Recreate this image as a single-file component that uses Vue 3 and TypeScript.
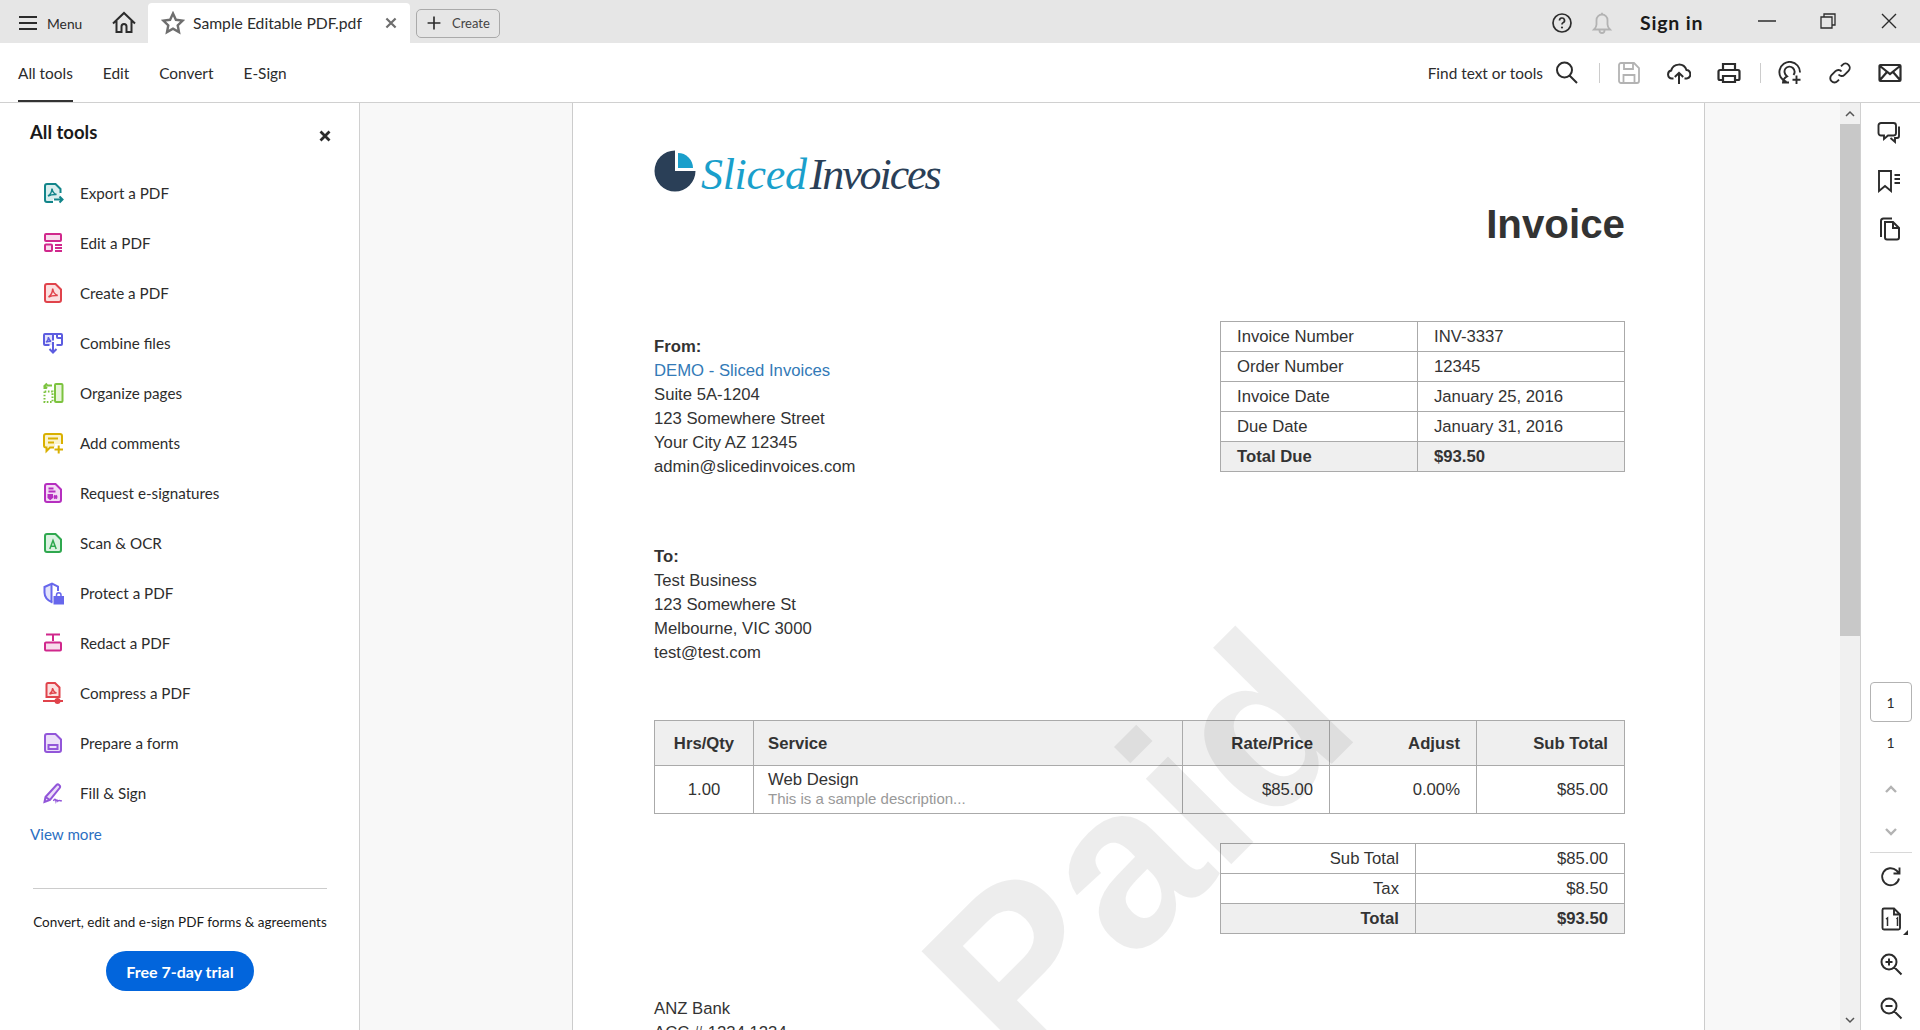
<script setup lang="ts">
interface Shape {
  d: string
  kind?: 'tint' | 'solid' | 'thin' | 'dots'
}

interface Tool {
  label: string
  color: string
  tint: string
  shapes: Shape[]
}

const docPath = 'M12.5 1H4a2 2 0 0 0-2 2v14a2 2 0 0 0 2 2h12a2 2 0 0 0 2-2V6.5z'
const acrobat = 'M5.5 14c2.5-1.5 4-4.5 4.2-8.5.4 3.5 2 6 5 7-3.2-.2-6.400.2-9.200 1.500z'

const tools: Tool[] = [
  {
    label: 'Export a PDF', color: '#12858a', tint: '#d9eeee',
    shapes: [
      { d: 'M12.500 1H4a2 2 0 0 0-2 2v14a2 2 0 0 0 2 2h6V16h7V6z', kind: 'tint' },
      { d: 'M17.500 10V6L12.500 1H4a2 2 0 0 0-2 2v14a2 2 0 0 0 2 2h6' },
      { d: 'M11 16.500h8.500M16.500 13.500l3 3-3 3' },
      { d: 'M5 13c2.500-1.500 3.800-4 4-7.500.4 3 2 5.200 4.500 6-3-.2-5.700.2-8.500 1.500z', kind: 'thin' }
    ]
  },
  {
    label: 'Edit a PDF', color: '#d0288c', tint: '#f8dcec',
    shapes: [
      { d: 'M2 1h16v7H2zM2 11.500h7V18H2z', kind: 'tint' },
      { d: 'M3 1h14a1 1 0 0 1 1 1v5a1 1 0 0 1-1 1H3a1 1 0 0 1-1-1V2a1 1 0 0 1 1-1zM3 11.500h5a1 1 0 0 1 1 1V17a1 1 0 0 1-1 1H3a1 1 0 0 1-1-1v-4.500a1 1 0 0 1 1-1z' },
      { d: 'M12 12h7M12 15h7M12 18h7' }
    ]
  },
  {
    label: 'Create a PDF', color: '#e0434b', tint: '#fbe0e0',
    shapes: [
      { d: docPath, kind: 'tint' },
      { d: docPath },
      { d: acrobat, kind: 'thin' }
    ]
  },
  {
    label: 'Combine files', color: '#5c5ce0', tint: '#e3e3fb',
    shapes: [
      { d: 'M1 1h8.500v11H1z', kind: 'tint' },
      { d: 'M6.500 12H2a1 1 0 0 1-1-1V2a1 1 0 0 1 1-1h16a1 1 0 0 1 1 1v4.500V11a1 1 0 0 1-1 1h-4.500' },
      { d: 'M10 1v6.500M14 1v3a1 1 0 0 0 1 1h4' },
      { d: 'M10 9v10.500M6.500 16l3.500 3.500 3.500-3.500' },
      { d: 'M3 9c1.500-1 2.500-2.500 2.500-5 .3 2 1 3.500 2.500 4.300-1.800-.1-3.500.1-5 .7z', kind: 'thin' }
    ]
  },
  {
    label: 'Organize pages', color: '#7cc33f', tint: '#e8f5da',
    shapes: [
      { d: 'M12 1h7.500v18H12z', kind: 'tint' },
      { d: 'M13 1h5.500a1 1 0 0 1 1 1v16a1 1 0 0 1-1 1H13a1 1 0 0 1-1-1V2a1 1 0 0 1 1-1z' },
      { d: 'M9 2.500H3.500M4 .5l-2.500 2.500L4 5.500M1.500 3v3' },
      { d: 'M1.500 8.500v10.500H9.500V8.500H1.500', kind: 'dots' }
    ]
  },
  {
    label: 'Add comments', color: '#d9b000', tint: '#fbf3cd',
    shapes: [
      { d: 'M3 1h14a2 2 0 0 1 2 2v8h-7v3H3a2 2 0 0 1-2-2V3a2 2 0 0 1 2-2z', kind: 'tint' },
      { d: 'M11 14.500H7l-3.500 3.500v-3.500H3a2 2 0 0 1-2-2V3a2 2 0 0 1 2-2h14a2 2 0 0 1 2 2v8' },
      { d: 'M5 5.500h10M5 9.500h6' },
      { d: 'M11.500 16.500h8.500M15.700 12.500v8' }
    ]
  },
  {
    label: 'Request e-signatures', color: '#b52fbf', tint: '#f3dcf5',
    shapes: [
      { d: docPath, kind: 'tint' },
      { d: docPath },
      { d: 'M5.500 5.500h5M5.500 8.500h7' },
      { d: 'M5.500 12h3.500v2.500L7.200 16 5.500 14.500z', kind: 'solid' },
      { d: 'M11 12.500l3 3m0-3l-3 3' }
    ]
  },
  {
    label: 'Scan & OCR', color: '#2fa84f', tint: '#dcf2e2',
    shapes: [
      { d: docPath, kind: 'tint' },
      { d: docPath },
      { d: 'M6.800 16l3.200-8.500 3.200 8.500M8 13.200h4', kind: 'thin' }
    ]
  },
  {
    label: 'Protect a PDF', color: '#6767ec', tint: '#e3e3fb',
    shapes: [
      { d: 'M9 .5L2 4v6c0 4 3 7.500 7 9.500z', kind: 'tint' },
      { d: 'M9.500 19.500C4.500 17.500 1.500 14 1.500 9.500V4L9 .5 15 3.500V8M8.500 1v18' },
      { d: 'M11.500 14h8.500v6.500h-8.500z', kind: 'solid' },
      { d: 'M13.500 14v-2a2.200 2.200 0 0 1 4.500 0v2', kind: 'thin' }
    ]
  },
  {
    label: 'Redact a PDF', color: '#d0288c', tint: '#f8dcec',
    shapes: [
      { d: 'M2 9.500h16v8H2z', kind: 'tint' },
      { d: 'M3 1.500h14M10 1.500v6.500' },
      { d: 'M3 9.500h14a1 1 0 0 1 1 1v6a1 1 0 0 1-1 1H3a1 1 0 0 1-1-1v-6a1 1 0 0 1 1-1z' }
    ]
  },
  {
    label: 'Compress a PDF', color: '#e0434b', tint: '#fbe0e0',
    shapes: [
      { d: 'M12 0H5a1.500 1.500 0 0 0-1.500 1.500v13h13V4.500z', kind: 'tint' },
      { d: 'M3.500 14V1.500A1.500 1.500 0 0 1 5 0h7l4.500 4.500V14z' },
      { d: 'M6.500 11c1.800-1 3-3 3.200-6 .3 2.500 1.500 4.300 3.800 5-2.400-.2-4.800 0-7 1z', kind: 'thin' },
      { d: 'M0 18h20' },
      { d: 'M14.500 16a2 2 0 1 1 0 4 2 2 0 0 1 0-4z', kind: 'solid' }
    ]
  },
  {
    label: 'Prepare a form', color: '#9256d9', tint: '#ecdff9',
    shapes: [
      { d: docPath, kind: 'tint' },
      { d: docPath },
      { d: 'M5.500 12h9v4h-9z' }
    ]
  },
  {
    label: 'Fill & Sign', color: '#9256d9', tint: '#ecdff9',
    shapes: [
      { d: 'M2.500 14L13.500 2c1.500-1.500 4.500.5 3.300 2.800L7 17l-5.500 2z', kind: 'tint' },
      { d: 'M2.500 14L13.500 2c1.500-1.500 4.500.5 3.300 2.800L7 17l-5.500 2zM2.500 14L7 17' },
      { d: 'M10.500 18c1-2.500 2-2.500 2.500 0 .5-1.500 1.300-1.500 1.800 0 .8-.8 2-.8 4 0', kind: 'thin' }
    ]
  }
]

const invoiceRows = [
  ['Invoice Number', 'INV-3337'],
  ['Order Number', '12345'],
  ['Invoice Date', 'January 25, 2016'],
  ['Due Date', 'January 31, 2016']
]

const fromLines = ['Suite 5A-1204', '123 Somewhere Street', 'Your City AZ 12345', 'admin@slicedinvoices.com']
const toLines = ['Test Business', '123 Somewhere St', 'Melbourne, VIC 3000', 'test@test.com']

function shapeFill(tool: Tool, shape: Shape): string {
  if (shape.kind === 'tint') return tool.tint
  if (shape.kind === 'solid') return tool.color
  return 'none'
}

function shapeStroke(tool: Tool, shape: Shape): string {
  return shape.kind === 'tint' ? 'none' : tool.color
}

function shapeWidth(shape: Shape): number {
  return shape.kind === 'thin' ? 1.5 : 2
}

// the outline of the moved page in "Organize pages" is dotted
function shapeDash(shape: Shape): string | undefined {
  return shape.kind === 'dots' ? '1.6 1.6' : undefined
}
</script>

<template>
  <div class="app">
    <!-- window title bar with the open tab -->
    <header class="titlebar">
      <div class="menu-btn">
        <svg class="ico" viewBox="0 0 24 24"><path d="M3 6h18M3 12h18M3 18h18" stroke-width="2.200" /></svg>
        <span class="menu-label">Menu</span>
      </div>
      <svg class="ico" viewBox="0 0 24 24"><path d="M1 12.500L12 2l11 10.500M4.500 10v11h5v-5.500a2.500 2.500 0 0 1 5 0V21h5V10" stroke-width="2" /></svg>
      <div class="tab">
        <svg class="ico" viewBox="0 0 24 24"><path class="star" d="M12 2.500l2.900 6.300 6.800.8-5 4.700 1.300 6.800-6-3.400-6 3.400 1.300-6.800-5-4.700 6.800-.8z" stroke-width="2.400" /></svg>
        <span class="tab-name">Sample Editable PDF.pdf</span>
        <svg class="ico tab-close" viewBox="0 0 24 24"><path class="star" d="M7 7l10 10M17 7L7 17" stroke-width="2.400" /></svg>
      </div>
      <div class="create">
        <svg class="ico" viewBox="0 0 24 24"><path d="M12 5v14M5 12h14" stroke-width="1.800" /></svg>
        <span>Create</span>
      </div>
      <div class="title-right">
        <svg class="ico" viewBox="0 0 24 24">
          <circle cx="12" cy="12" r="9" stroke-width="1.700" />
          <path d="M9.500 9.500a2.500 2.500 0 1 1 3.500 2.300c-.7.300-1 .8-1 1.700" stroke-width="1.700" />
          <circle class="dot" cx="12" cy="16.500" r="1.100" />
        </svg>
        <svg class="ico ico--off bell" viewBox="0 0 24 24"><path d="M4 18.500c1.500-1.500 2.500-2.500 2.500-5V9a5.500 5.500 0 0 1 11 0v4.500c0 2.500 1 3.500 2.500 5zM9.500 18.500v1a2.500 2.500 0 0 0 5 0v-1M12 3V1.800" stroke-width="1.800" /></svg>
        <span class="signin">Sign in</span>
        <svg class="ico winctl" viewBox="0 0 24 24"><path d="M3 21h18" transform="translate(0 -11)" stroke-width="1.500" /></svg>
        <svg class="ico winctl" viewBox="0 0 24 24"><path d="M5 8h11v11H5zM8 8V5h11v11h-3" transform="translate(0 -2)" stroke-width="1.300" /></svg>
        <svg class="ico winctl" viewBox="0 0 24 24"><path d="M5 3l14 14M19 3L5 17" stroke-width="1.400" /></svg>
      </div>
    </header>

    <!-- tabs and quick tools -->
    <nav class="toolbar">
      <div class="tabs">
        <span class="tabs__item tabs__item--on">All tools</span>
        <span class="tabs__item">Edit</span>
        <span class="tabs__item">Convert</span>
        <span class="tabs__item">E-Sign</span>
      </div>
      <div class="quick">
        <span class="find">Find text or tools</span>
        <svg class="ico search" viewBox="0 0 24 24"><path d="M16 16l7 7M18 10a7.500 7.500 0 1 1-15 0 7.500 7.500 0 0 1 15 0z" transform="translate(0 -1)" stroke-width="2" /></svg>
        <span class="sep sep--a"></span>
        <svg class="ico ico--off save" viewBox="0 0 24 24"><path d="M4 2h13l5 5v13a2 2 0 0 1-2 2H4a2 2 0 0 1-2-2V4a2 2 0 0 1 2-2zM7 2v6h9V2M6.500 22v-8h11v8" stroke-width="1.800" /></svg>
        <svg class="ico" viewBox="0 0 24 24"><path d="M6.500 17.500H5a4 4 0 0 1-.8-7.900A8 8 0 0 1 19.500 9a4.300 4.300 0 0 1 .3 8.500h-2.300M12 23V12M7.800 16l4.200-4.200 4.200 4.200" stroke-width="2" /></svg>
        <svg class="ico" viewBox="0 0 24 24"><path d="M6 9V3h12v6M6 19H3a1.500 1.500 0 0 1-1.500-1.500v-7A1.500 1.500 0 0 1 3 9h18a1.500 1.500 0 0 1 1.500 1.500v7A1.500 1.500 0 0 1 21 19h-3M6 15h12v6H6z" stroke-width="2.200" /></svg>
        <span class="sep sep--b"></span>
        <svg class="ico" viewBox="0 0 24 24"><path d="M11 21.500H5c.2-3 1.700-5 4-6.200-2.700-2-3.200-5.600-1.500-7.800 1.800-2.300 5.300-2.600 7.400-.5 1.900 1.900 2 4.900.6 7M8.500 21A10.300 10.300 0 1 1 22 11.500M18.500 14.500v8.500M14.500 18.800h8" stroke-width="1.900" /></svg>
        <svg class="ico" viewBox="0 0 24 24"><path d="M10.500 13.500a4 4 0 0 0 6 .3l4-4a4.200 4.200 0 0 0-6-6l-1.500 1.500M13.500 10.500a4 4 0 0 0-6-.3l-4 4a4.200 4.200 0 0 0 6 6l1.500-1.500" stroke-width="1.900" /></svg>
        <svg class="ico" viewBox="0 0 24 24"><path d="M2.500 4h19a1 1 0 0 1 1 1v14a1 1 0 0 1-1 1h-19a1 1 0 0 1-1-1V5a1 1 0 0 1 1-1zM2 5l10 8 10-8M2 19l7-8M22 19l-7-8" stroke-width="2.200" /></svg>
      </div>
    </nav>

    <div class="workspace">
      <aside class="sidebar">
        <div class="sidebar__head">
          <span class="sidebar__title">All tools</span>
          <svg class="ico sidebar__close" viewBox="0 0 24 24"><path d="M7.500 7.500l9 9M16.500 7.500l-9 9" stroke-width="2.800" /></svg>
        </div>
        <ul class="tool-list">
          <li v-for="tool in tools" :key="tool.label" class="tool">
            <svg class="tool__icon" viewBox="0 0 20 20">
              <path
                v-for="(shape, i) in tool.shapes"
                :key="i"
                :d="shape.d"
                :fill="shapeFill(tool, shape)"
                :stroke="shapeStroke(tool, shape)"
                :stroke-width="shapeWidth(shape)"
                :stroke-dasharray="shapeDash(shape)"
              />
            </svg>
            <span>{{ tool.label }}</span>
          </li>
        </ul>
        <a class="view-more">View more</a>
        <div class="promo">
          <p class="promo__text">Convert, edit and e-sign PDF forms &amp; agreements</p>
          <button class="promo__btn">Free 7-day trial</button>
        </div>
      </aside>

      <main class="viewer">
        <article class="page">
          <div class="logo">
            <svg class="logo__mark" viewBox="0 0 44 44">
              <path d="M21 .5A20.500 20.500 0 1 0 41.500 21H21z" fill="#2a3f57" />
              <path d="M24 3a15 15 0 0 1 15 15H24z" fill="#1a9fcb" />
            </svg>
            <span class="logo__sliced">Sliced</span><span class="logo__invoices">Invoices</span>
          </div>
          <h1 class="doc-title">Invoice</h1>

          <section class="parties">
            <div class="address address--from">
              <strong>From:</strong>
              <span class="address__link">DEMO - Sliced Invoices</span>
              <span v-for="line in fromLines" :key="line">{{ line }}</span>
            </div>
            <table class="grid grid--meta">
              <colgroup><col class="meta-key" /><col /></colgroup>
              <tr v-for="row in invoiceRows" :key="row[0]">
                <td>{{ row[0] }}</td>
                <td>{{ row[1] }}</td>
              </tr>
              <tr class="shade">
                <td><b>Total Due</b></td>
                <td><b>$93.50</b></td>
              </tr>
            </table>
          </section>

          <div class="address address--to">
            <strong>To:</strong>
            <span v-for="line in toLines" :key="line">{{ line }}</span>
          </div>

          <table class="grid grid--items">
            <colgroup>
              <col class="c-qty" /><col class="c-service" /><col class="c-num" /><col class="c-num" /><col class="c-sub" />
            </colgroup>
            <tr class="shade head">
              <th class="center">Hrs/Qty</th>
              <th class="left">Service</th>
              <th>Rate/Price</th>
              <th>Adjust</th>
              <th>Sub Total</th>
            </tr>
            <tr class="item">
              <td class="center">1.00</td>
              <td>
                <div class="item__name">Web Design</div>
                <div class="item__desc">This is a sample description...</div>
              </td>
              <td class="right">$85.00</td>
              <td class="right">0.00%</td>
              <td class="right">$85.00</td>
            </tr>
          </table>

          <table class="grid grid--totals">
            <colgroup><col class="tot-key" /><col /></colgroup>
            <tr><td class="right">Sub Total</td><td class="right">$85.00</td></tr>
            <tr><td class="right">Tax</td><td class="right">$8.50</td></tr>
            <tr class="shade"><td class="right"><b>Total</b></td><td class="right"><b>$93.50</b></td></tr>
          </table>

          <div class="address address--bank">
            <span>ANZ Bank</span>
            <span>ACC # 1234 1234</span>
          </div>

          <!-- the stamp lies across the tables, so it sits over the sheet -->
          <svg class="stamp" width="1131" height="927">
            <text x="449" y="970.600" transform="rotate(-45 449 970.600)">Paid</text>
          </svg>
        </article>
      </main>

      <div class="scrollbar">
        <div class="scrollbar__btn">
          <svg width="12" height="12" viewBox="0 0 12 12"><path d="M2 8l4-4 4 4" /></svg>
        </div>
        <div class="scrollbar__thumb"></div>
        <div class="scrollbar__btn scrollbar__btn--end">
          <svg width="12" height="12" viewBox="0 0 12 12"><path d="M2 4l4 4 4-4" /></svg>
        </div>
      </div>

      <aside class="rail">
        <div class="rail__top">
          <svg class="ico" viewBox="0 0 24 24"><path d="M4 2h12.500A2.500 2.500 0 0 1 19 4.500V12a2.500 2.500 0 0 1-2.500 2.500H11L7 18v-3.500H4A2.500 2.500 0 0 1 1.500 12V4.500A2.500 2.500 0 0 1 4 2zM22 5.500V15a2 2 0 0 1-2 2h-2v4l-4.500-4" stroke-width="1.900" /></svg>
          <svg class="ico" viewBox="0 0 24 24"><path d="M2 2h12v20l-6-5-6 5zM17.500 6H23M17.500 10H23M17.500 14H23" stroke-width="1.900" /></svg>
          <svg class="ico" viewBox="0 0 24 24"><path d="M8 5h8l6 6v9.500a2 2 0 0 1-2 2H10a2 2 0 0 1-2-2zM16 5v6h6M4 20V4a2.500 2.500 0 0 1 2.500-2.500H15" stroke-width="2" /></svg>
        </div>
        <div class="rail__bottom">
          <div class="page-box">1</div>
          <div class="page-count">1</div>
          <svg class="ico ico--off chev-up" viewBox="0 0 24 24"><path d="M7 15l5-5 5 5" stroke-width="2.400" /></svg>
          <svg class="ico ico--off chev-down" viewBox="0 0 24 24"><path d="M7 10l5 5 5-5" stroke-width="2.400" /></svg>
          <span class="rail__sep"></span>
          <svg class="ico r-rotate" viewBox="0 0 24 24"><path d="M20 13.500A8.500 8.500 0 1 1 17.500 5.500L20.500 8.500M20.500 2.500v6h-6" stroke-width="1.900" /></svg>
          <div class="r-fit">
            <svg class="ico" viewBox="0 0 24 24"><path d="M5 1.500h10l6 6V21a1.500 1.500 0 0 1-1.500 1.500h-14.500A1.500 1.500 0 0 1 3.500 21V3A1.500 1.500 0 0 1 5 1.500zM15 1.500v6h6" stroke-width="1.900" /><path d="M7 12l1.500-1v8M17.500 12l1-1v8M12.800 13.500v.1M12.800 17v.1" stroke-width="1.500" /></svg>
            <span class="r-fit__corner"></span>
          </div>
          <svg class="ico r-zoomin" viewBox="0 0 24 24"><path d="M15.500 15.500l7 7M17.500 10a7.500 7.500 0 1 1-15 0 7.500 7.500 0 0 1 15 0zM10 6.500v7M6.500 10h7" stroke-width="2" /></svg>
          <svg class="ico r-zoomout" viewBox="0 0 24 24"><path d="M15.500 15.500l7 7M17.500 10a7.500 7.500 0 1 1-15 0 7.500 7.500 0 0 1 15 0zM6.500 10h7" stroke-width="2" /></svg>
        </div>
      </aside>
    </div>
  </div>
</template>

<style scoped>
.app {
  width: 1920px;
  height: 1030px;
  display: flex;
  flex-direction: column;
  overflow: hidden;
  background: #fff;
  color: #2c2c2c;
  font-family: Lato, "Noto Sans", sans-serif;
}

.ico {
  width: 24px;
  height: 24px;
  flex-shrink: 0;
  fill: none;
  stroke: #2c2c2c;
}

.ico path,
.ico circle {
  stroke: inherit;
  fill: none;
}

.ico .dot {
  fill: #2c2c2c;
  stroke: none;
}

.ico .star {
  stroke: #6e6e6e;
}

.ico--off {
  stroke: #b3b3b3;
}

/* title bar */
.titlebar {
  height: 43px;
  flex-shrink: 0;
  box-sizing: border-box;
  display: flex;
  align-items: center;
  background: #e6e6e6;
  padding: 3px 0 0 16px;
}

.menu-btn {
  width: 96px;
  display: flex;
  align-items: center;
  gap: 7px;
}

.menu-label {
  font-size: 13.800px;
}

.tab {
  align-self: flex-end;
  width: 262px;
  height: 40px;
  margin-left: 12px;
  padding: 0 8px 0 13px;
  box-sizing: border-box;
  display: flex;
  align-items: center;
  background: #fff;
  border-radius: 4px 4px 0 0;
}

.tab-name {
  margin-left: 8px;
  font-size: 15.700px;
  white-space: nowrap;
}

.tab-close {
  margin-left: auto;
  width: 22px;
  height: 22px;
}

.create {
  width: 84px;
  height: 29px;
  margin-left: 6px;
  box-sizing: border-box;
  display: flex;
  align-items: center;
  gap: 7px;
  padding-left: 6px;
  border: 1px solid #aaa;
  border-radius: 5px;
  font-size: 13px;
  color: #444;
}

.create .ico {
  width: 22px;
  height: 22px;
}

.title-right {
  margin-left: auto;
  padding-right: 19px;
  display: flex;
  align-items: center;
}

.bell {
  margin-left: 16px;
}

.signin {
  margin: -2px 0 0 26px;
  width: 63px;
  font-size: 19.500px;
  font-weight: 700;
  letter-spacing: 0.8px;
  white-space: nowrap;
  color: #1a1a1a;
}

.winctl {
  margin-left: 37px;
}

.signin + .winctl {
  margin-left: 52px;
}

/* second row */
.toolbar {
  height: 60px;
  flex-shrink: 0;
  box-sizing: border-box;
  display: flex;
  justify-content: space-between;
  align-items: center;
  padding: 0 18px;
  border-bottom: 1px solid #d0d0d0;
}

.tabs {
  display: flex;
  gap: 30px;
  height: 100%;
}

.tabs__item {
  height: 100%;
  box-sizing: border-box;
  display: flex;
  align-items: center;
  padding-top: 2px;
  font-size: 15.400px;
  border-bottom: 2px solid transparent;
}

.tabs__item--on {
  border-bottom-color: #333;
}

.quick {
  display: flex;
  align-items: center;
  gap: 26px;
}

.find {
  font-size: 15.400px;
  white-space: nowrap;
}

.search {
  margin-left: -15px;
}

.sep {
  width: 1px;
  height: 20px;
  background: #ccc;
}

.sep--a {
  margin: 0 -9px 0 -5px;
}

.sep--b {
  margin: 0 -9px 0 -7px;
}

/* body of the window */
.workspace {
  flex: 1;
  min-height: 0;
  display: flex;
}

.sidebar {
  width: 360px;
  flex-shrink: 0;
  box-sizing: border-box;
  border-right: 1px solid #d0d0d0;
}

.sidebar__head {
  height: 65px;
  box-sizing: border-box;
  padding: 17px 0 0 30px;
  display: flex;
  justify-content: space-between;
  align-items: flex-start;
}

.sidebar__title {
  font-size: 18.500px;
  font-weight: 700;
  line-height: 24px;
  color: #1a1a1a;
}

.sidebar__close {
  margin: 4px 22px 0 0;
}

.tool-list {
  list-style: none;
  margin: 0;
  padding: 0;
}

.tool {
  height: 50px;
  padding-left: 43px;
  display: flex;
  align-items: center;
  gap: 17px;
  font-size: 15.200px;
}

.tool__icon {
  width: 20px;
  height: 20px;
  overflow: visible;
  flex-shrink: 0;
}

.view-more {
  display: block;
  margin: 6px 0 0 30px;
  line-height: 20px;
  font-size: 15.200px;
  color: #2b6fc2;
}

.promo {
  margin: 44px 32px 0 33px;
  border-top: 1px solid #ccc;
  text-align: center;
}

.promo__text {
  margin: 23px 0 0;
  line-height: 20px;
  font-size: 13.500px;
  color: #1a1a1a;
  white-space: nowrap;
}

.promo__btn {
  display: block;
  width: 148px;
  height: 40px;
  margin: 19px auto 0;
  border: 0;
  border-radius: 20px;
  background: #0265dc;
  color: #fff;
  font: 700 16px Lato, "Noto Sans", sans-serif;
}

.viewer {
  width: 1480px;
  flex-shrink: 0;
  background: #f8f8f8;
  overflow: hidden;
}

.page {
  position: relative;
  width: 1133px;
  height: 100%;
  margin-left: 212px;
  box-sizing: border-box;
  padding: 48px 79px 0 81px;
  background: #fff;
  border: solid #ccc;
  border-width: 0 1px;
  color: #333;
  font-family: "Liberation Sans", Arial, sans-serif;
  font-size: 16.700px;
  overflow: hidden;
}

.logo {
  height: 41px;
  display: flex;
  align-items: center;
  white-space: nowrap;
  font-family: "Liberation Serif", serif;
  font-style: italic;
  font-size: 44px;
}

.logo__mark {
  width: 44px;
  height: 44px;
  margin-right: 3px;
  flex-shrink: 0;
}

.logo__sliced {
  margin-top: 6px;
  letter-spacing: -0.300px;
  color: #1a9fcb;
}

.logo__invoices {
  margin: 6px 0 0 3px;
  letter-spacing: -2.100px;
  color: #2a3f57;
}

.doc-title {
  margin: 10px 0 0;
  text-align: right;
  font-size: 40.300px;
  line-height: 46px;
  font-weight: 700;
}

.parties {
  margin-top: 73px;
  display: flex;
  justify-content: space-between;
  align-items: flex-start;
}

.address {
  display: flex;
  flex-direction: column;
  line-height: 24px;
}

.address--from {
  margin-top: 14px;
}

.address--to {
  margin-top: 66px;
}

.address--bank {
  margin-top: 63px;
}

.address__link {
  color: #337ab7;
}

.grid {
  border-collapse: collapse;
  table-layout: fixed;
  line-height: 18px;
}

.grid td,
.grid th {
  border: 1px solid #aaa;
  height: 30px;
  padding: 0 16px;
  box-sizing: border-box;
}

.grid--meta {
  width: 405px;
}

.meta-key {
  width: 197px;
}

.grid--items {
  width: 970px;
  margin-top: 55px;
}

.c-qty {
  width: 99px;
}

.c-service {
  width: 429px;
}

.c-num {
  width: 147px;
}

.c-sub {
  width: 148px;
}

.grid--totals {
  width: 405px;
  margin: 29px 0 0 auto;
}

.tot-key {
  width: 195px;
}

.shade td,
.shade th {
  background: #efefef;
}

.head th {
  height: 45px;
  padding-top: 2px;
  text-align: right;
}

.grid .head .center {
  text-align: center;
}

.grid .head .left {
  text-align: left;
  padding-left: 14px;
}

.item td {
  height: 48px;
}

.item td:nth-child(2) {
  padding-left: 14px;
}

.grid .center {
  text-align: center;
}

.grid .right {
  text-align: right;
}

.item__name {
  margin-top: -1px;
}

.item__desc {
  margin-top: 2px;
  font-size: 15px;
  line-height: 16px;
  color: #999;
}

.stamp {
  position: absolute;
  left: 0;
  top: 0;
  pointer-events: none;
}

.stamp text {
  font-family: "Liberation Sans", Arial, sans-serif;
  font-size: 229px;
  font-weight: 700;
  fill: rgba(0, 0, 0, 0.07);
}

/* fake scrollbar */
.scrollbar {
  width: 21px;
  flex-shrink: 0;
  box-sizing: border-box;
  display: flex;
  flex-direction: column;
  background: #f0f0f0;
  border-right: 1px solid #d0d0d0;
}

.scrollbar__btn {
  height: 21px;
  display: flex;
  align-items: center;
  justify-content: center;
}

.scrollbar__btn--end {
  margin-top: auto;
}

.scrollbar__btn path {
  fill: none;
  stroke: #555;
  stroke-width: 1.500;
}

.scrollbar__thumb {
  height: 512px;
  background: #c8c8c8;
}

/* right rail */
.rail {
  width: 59px;
  flex-shrink: 0;
  display: flex;
  flex-direction: column;
  align-items: center;
  justify-content: space-between;
}

.rail__top {
  padding: 18px 3px 0 0;
  display: flex;
  flex-direction: column;
  gap: 24px;
}

.rail__bottom {
  padding-bottom: 10px;
  display: flex;
  flex-direction: column;
  align-items: center;
}

.page-box {
  width: 42px;
  height: 40px;
  box-sizing: border-box;
  border: 1px solid #b3b3b3;
  border-radius: 4px;
  display: flex;
  align-items: center;
  justify-content: center;
  font-size: 14px;
}

.page-count {
  height: 24px;
  margin-top: 9px;
  line-height: 24px;
  font-size: 14px;
}

.chev-up {
  margin-top: 22px;
}

.chev-down {
  margin-top: 18px;
}

.rail__sep {
  width: 42px;
  height: 1px;
  margin-top: 9px;
  background: #d8d8d8;
}

.r-rotate {
  margin-top: 12px;
}

.r-fit {
  position: relative;
  height: 24px;
  margin-top: 18px;
}

.r-fit__corner {
  position: absolute;
  right: -5px;
  bottom: -4px;
  border: solid transparent;
  border-width: 0 0 5px 5px;
  border-bottom-color: #2c2c2c;
}

.r-zoomin {
  margin-top: 21px;
}

.r-zoomout {
  margin-top: 20px;
}
</style>

<style>
html,
body {
  margin: 0;
  overflow: hidden;
}
</style>
